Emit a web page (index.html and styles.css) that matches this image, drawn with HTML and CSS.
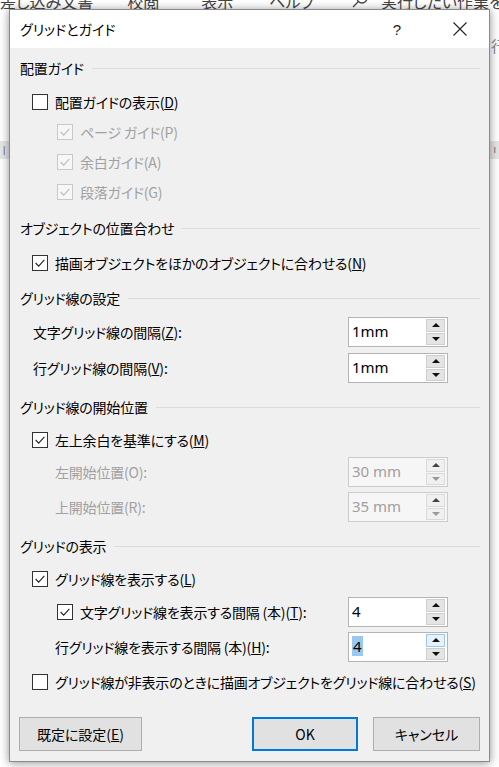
FILE: index.html
```html
<!DOCTYPE html>
<html lang="ja">
<head>
<meta charset="utf-8">
<link rel="stylesheet" href="styles.css">
</head>
<body>
<div class="backdrop">
  <div class="tabs">
    <span class="tab t1">差し込み文書</span>
    <span class="tab t2">校閲</span>
    <span class="tab t3">表示</span>
    <span class="tab t4">ヘルプ</span>
    <svg class="search" width="18" height="18" viewBox="0 0 18 18"><circle cx="11" cy="6" r="5" fill="none" stroke="#444" stroke-width="1.3"/><line x1="7.5" y1="9.5" x2="2" y2="15" stroke="#444" stroke-width="1.3"/></svg>
    <span class="tab t5">実行したい作業を入力</span>
  </div>
  <div class="side-char">行</div>
  <div class="ruler"><span>|</span><span>I</span></div>
</div>

<div class="dialog">
  <div class="titlebar">
    <span class="title">グリッドとガイド</span>
    <span class="help">?</span>
    <svg class="close" width="16" height="16" viewBox="0 0 16 16"><path d="M1.5 1.5 L14.5 14.5 M14.5 1.5 L1.5 14.5" stroke="#222" stroke-width="1.1" fill="none"/></svg>
  </div>
  <div class="body">
    <div class="row sec first"><span>配置ガイド</span><i class="rule"></i></div>
    <div class="row lv1 m6"><span class="cb"></span><span class="lbl">配置ガイドの表示(<u>D</u>)</span></div>
    <div class="row lv2 m2 dis"><span class="cb on"><svg viewBox="0 0 16 16"><polyline points="3,8 6.5,11.5 13,4.5"/></svg></span><span class="lbl">ページ ガイド(P)</span></div>
    <div class="row lv2 m2 dis"><span class="cb on"><svg viewBox="0 0 16 16"><polyline points="3,8 6.5,11.5 13,4.5"/></svg></span><span class="lbl">余白ガイド(A)</span></div>
    <div class="row lv2 m2 dis"><span class="cb on"><svg viewBox="0 0 16 16"><polyline points="3,8 6.5,11.5 13,4.5"/></svg></span><span class="lbl">段落ガイド(G)</span></div>

    <div class="row sec m8"><span>オブジェクトの位置合わせ</span><i class="rule"></i></div>
    <div class="row lv1 m7"><span class="cb on"><svg viewBox="0 0 16 16"><polyline points="3,8 6.5,11.5 13,4.5"/></svg></span><span class="lbl">描画オブジェクトをほかのオブジェクトに合わせる(<u>N</u>)</span></div>

    <div class="row sec m7"><span>グリッド線の設定</span><i class="rule"></i></div>
    <div class="row lv1 m6 field"><span class="flbl">文字グリッド線の間隔(<u>Z</u>):</span>
      <div class="spin"><span class="val">1mm</span><div class="btns"><b class="up"><i></i></b><b class="down"><i></i></b></div></div></div>
    <div class="row lv1 m8 field"><span class="flbl">行グリッド線の間隔(<u>V</u>):</span>
      <div class="spin"><span class="val">1mm</span><div class="btns"><b class="up"><i></i></b><b class="down"><i></i></b></div></div></div>

    <div class="row sec m11"><span>グリッド線の開始位置</span><i class="rule"></i></div>
    <div class="row lv1 m5"><span class="cb on"><svg viewBox="0 0 16 16"><polyline points="3,8 6.5,11.5 13,4.5"/></svg></span><span class="lbl">左上余白を基準にする(<u>M</u>)</span></div>
    <div class="row lv2 m4 field dis"><span class="flbl">左開始位置(O):</span>
      <div class="spin off"><span class="val">30 mm</span><div class="btns"><b class="up"><i></i></b><b class="down"><i></i></b></div></div></div>
    <div class="row lv2 m7 field dis"><span class="flbl">上開始位置(R):</span>
      <div class="spin off"><span class="val">35 mm</span><div class="btns"><b class="up"><i></i></b><b class="down"><i></i></b></div></div></div>

    <div class="row sec m11"><span>グリッドの表示</span><i class="rule"></i></div>
    <div class="row lv1 m5"><span class="cb on"><svg viewBox="0 0 16 16"><polyline points="3,8 6.5,11.5 13,4.5"/></svg></span><span class="lbl">グリッド線を表示する(<u>L</u>)</span></div>
    <div class="row lv2 m5 field"><span class="flbl inline"><span class="cb on"><svg viewBox="0 0 16 16"><polyline points="3,8 6.5,11.5 13,4.5"/></svg></span><span class="lbl">文字グリッド線を表示する間隔 (本)(<u>T</u>):</span></span>
      <div class="spin"><span class="val">4</span><div class="btns"><b class="up"><i></i></b><b class="down"><i></i></b></div></div></div>
    <div class="row lv2 m7 field"><span class="flbl">行グリッド線を表示する間隔 (本)(<u>H</u>):</span>
      <div class="spin focus"><span class="val"><span class="sel">4</span></span><div class="btns"><b class="up hot"><i></i></b><b class="down"><i></i></b></div></div></div>
    <div class="row lv1 m7"><span class="cb"></span><span class="lbl">グリッド線が非表示のときに描画オブジェクトをグリッド線に合わせる(<u>S</u>)</span></div>

    <div class="buttons">
      <button class="btn default">既定に設定(<u>E</u>)</button>
      <span class="spacer"></span>
      <button class="btn ok">OK</button>
      <button class="btn cancel">キャンセル</button>
    </div>
  </div>
</div>
</body>
</html>
```

FILE: styles.css
```css
html, body {
  margin: 0;
  padding: 0;
  background: #ffffff;
  width: 499px;
  height: 767px;
  overflow: hidden;
  font-family: "Noto Sans CJK JP", "Noto Sans", sans-serif;
}

.backdrop {
  position: relative;
  width: 499px;
  height: 767px;
  background: #ffffff;
}

.tabs {
  display: flex;
  align-items: center;
  height: 20px;
  margin-top: -9px;
  font-size: 16px;
  color: #444;
  white-space: nowrap;
  font-feature-settings: "palt";
}
.tab { flex: none; }
.t1 { margin-left: 0; }
.t2 { margin-left: 34px; }
.t3 { margin-left: 42px; }
.t4 { margin-left: 36px; }
.search { margin-left: 36px; flex: none; }
.t5 { margin-left: 12px; }

.side-char {
  position: absolute;
  left: 491px;
  top: 44px;
  font-size: 15px;
  color: #888;
}

.ruler {
  position: absolute;
  left: 0;
  top: 150px;
  width: 499px;
  height: 18px;
  background: #e6e6e6;
  display: flex;
  justify-content: space-between;
  align-items: center;
  font-family: "Liberation Sans", sans-serif;
  font-size: 9px;
  color: #666;
  padding: 0 3px;
  box-sizing: border-box;
}

.dialog {
  position: absolute;
  left: 9px;
  top: 9px;
  width: 481px;
  height: 753px;
  box-sizing: border-box;
  border: 1px solid #8a8a8a;
  background: #f0f0f0;
  box-shadow: 0 0 8px rgba(0,0,0,0.28), 0 3px 10px rgba(0,0,0,0.18);
  display: flex;
  flex-direction: column;
}

.titlebar {
  height: 38px;
  background: #ffffff;
  display: flex;
  align-items: center;
  padding-left: 10px;
  font-size: 14px;
  color: #000;
  font-feature-settings: "palt";
  flex: none;
}
.title { flex: 1; }
.help {
  font-family: "Liberation Sans", sans-serif;
  font-size: 15px;
  color: #222;
  margin-right: 51px;
}
.close { margin-right: 21px; }

.body {
  padding: 6px 9px 0 10px;
  font-size: 14px;
  letter-spacing: -0.2px;
  color: #000;
  font-feature-settings: "palt";
  display: flex;
  flex-direction: column;
}

.row {
  height: 28px;
  display: flex;
  align-items: center;
  white-space: nowrap;
  flex: none;
}
.m2 { margin-top: 2px; }
.m4 { margin-top: 4px; }
.m5 { margin-top: 5px; }
.m6 { margin-top: 6px; }
.m7 { margin-top: 7px; }
.m8 { margin-top: 8px; }
.m11 { margin-top: 11px; }

.sec span { flex: none; }
.rule {
  flex: 1;
  height: 1px;
  background: #dcdcdc;
  margin-left: 8px;
}

.lv1 { padding-left: 12px; }
.lv2 { padding-left: 37px; }
.lv1.field { padding-left: 13px; }
.lv2.field { padding-left: 35px; }

.cb {
  flex: none;
  width: 16px;
  height: 16px;
  box-sizing: border-box;
  border: 1px solid #333;
  background: #fff;
  margin-right: 7px;
  display: flex;
}
.cb svg { width: 14px; height: 14px; }
.cb polyline {
  fill: none;
  stroke: #222;
  stroke-width: 1.3;
}
.dis { color: #a0a0a0; }
.dis .cb { border-color: #c8c8c8; background: #f7f7f7; }
.dis .cb polyline { stroke: #bdbdbd; }

.field { justify-content: space-between; padding-right: 32px; }
.flbl { flex: none; }
.flbl.inline { display: flex; align-items: center; margin-left: 2px; }

.spin {
  flex: none;
  width: 100px;
  height: 30px;
  margin: -1px 0;
  box-sizing: border-box;
  border: 1px solid #b4b4b4;
  background: #fff;
  display: flex;
  align-items: stretch;
}
.val {
  flex: 1;
  display: flex;
  align-items: center;
  padding-left: 3px;
  font-family: "Noto Sans", "Liberation Sans", sans-serif;
  font-size: 15px;
  letter-spacing: 0;
  color: #000;
  padding-bottom: 3px;
}
.btns {
  flex: none;
  width: 19px;
  margin: 1px 2px 1px 0;
  display: flex;
  flex-direction: column;
  gap: 1px;
}
.btns b {
  flex: 1;
  box-sizing: border-box;
  background: #e4e4e4;
  border: 1px solid #cfcfcf;
  display: flex;
  align-items: center;
  justify-content: center;
}
.btns i {
  width: 0;
  height: 0;
  border-left: 4px solid transparent;
  border-right: 4px solid transparent;
}
.up i { border-bottom: 4px solid #111; }
.down i { border-top: 4px solid #111; }

.spin.off { background: #f6f6f6; border-color: #cccccc; }
.spin.off .val { color: #a0a0a0; }
.spin.off .btns b { background: #f0f0f0; border-color: #dadada; }
.spin.off .up i { border-bottom-color: #444; }
.spin.off .down i { border-top-color: #999; }

.sel { background: #99c9ef; color: #000; padding: 0 1px; }
.btns b.hot { background: #e5f1fb; border-color: #9cc8ee; }

.buttons {
  margin-top: 21px;
  display: flex;
  height: 34px;
  flex: none;
}
.spacer { flex: 1; }
.btn {
  font-family: "Noto Sans CJK JP", "Noto Sans", sans-serif;
  font-feature-settings: "palt";
  font-size: 14px;
  color: #000;
  background: #e1e1e1;
  border: 1px solid #adadad;
  padding: 0;
  height: 34px;
  box-sizing: border-box;
}
.default { width: 123px; margin-left: -1px; }
.ok { width: 106px; border: 2px solid #0078d7; }
.cancel { width: 107px; margin-left: 15px; }
```
